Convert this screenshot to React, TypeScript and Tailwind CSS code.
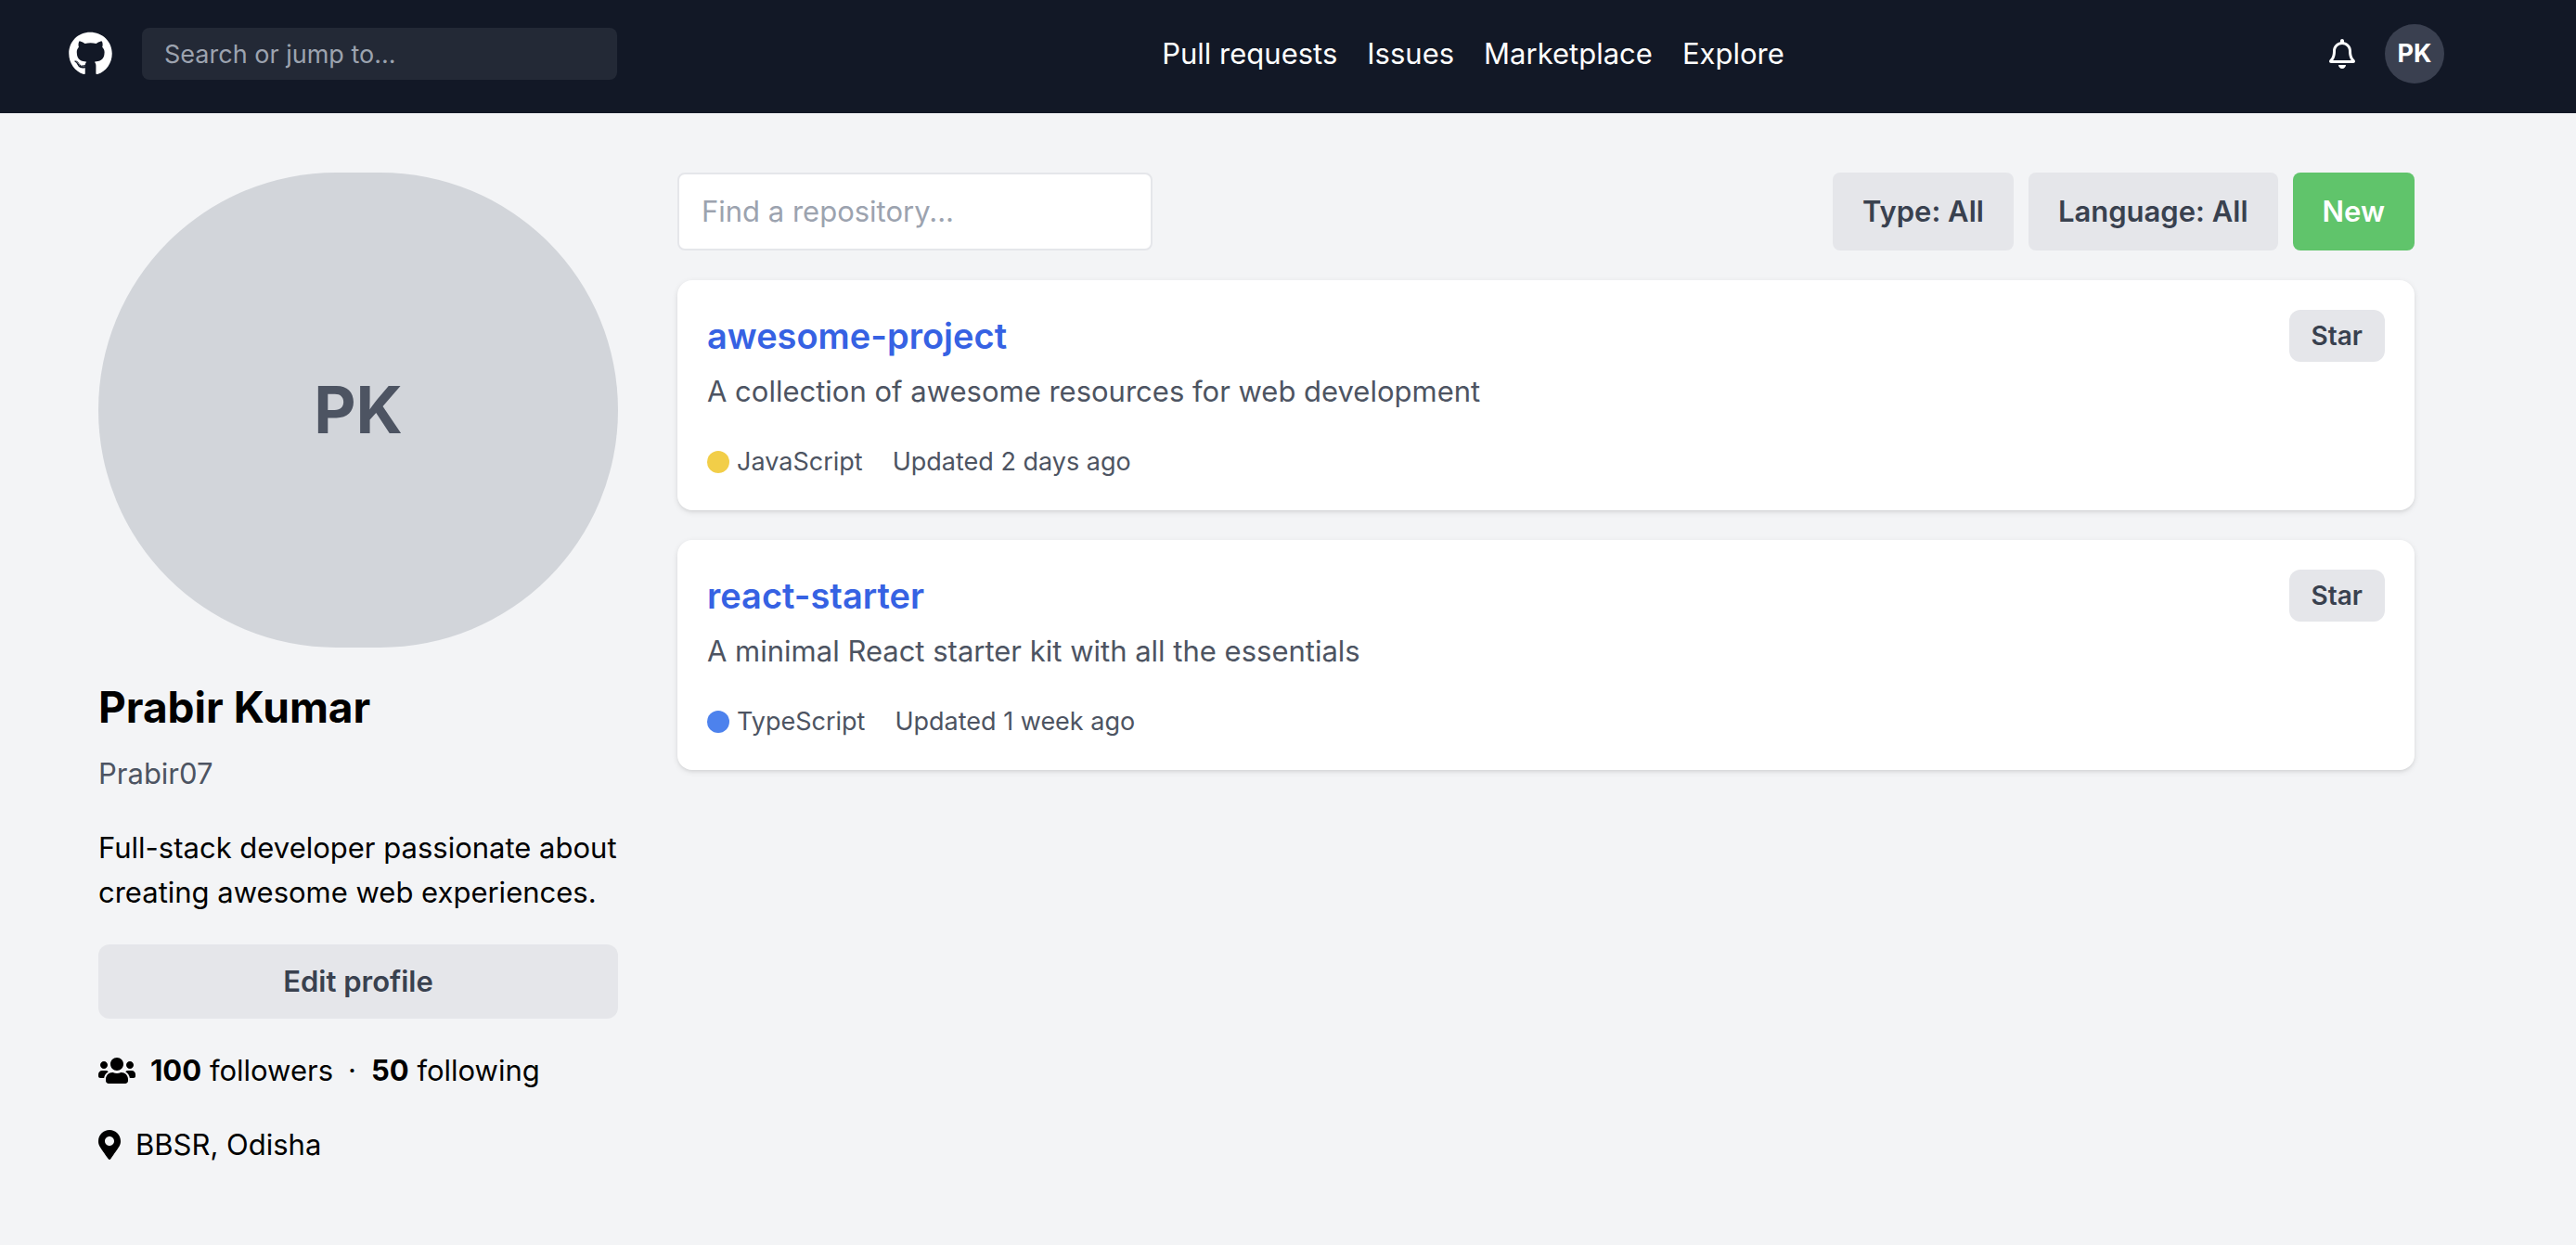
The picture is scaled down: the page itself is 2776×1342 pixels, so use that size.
import React from "react";
import { FaGithub, FaMapMarkerAlt, FaRegBell, FaUsers } from "react-icons/fa";

type Repo = {
  name: string;
  description: string;
  language: string;
  dot: string;
  updated: string;
};

const navLinks = ["Pull requests", "Issues", "Marketplace", "Explore"];

const repos: Repo[] = [
  {
    name: "awesome-project",
    description: "A collection of awesome resources for web development",
    language: "JavaScript",
    dot: "bg-[#f2ce48]",
    updated: "Updated 2 days ago",
  },
  {
    name: "react-starter",
    description: "A minimal React starter kit with all the essentials",
    language: "TypeScript",
    dot: "bg-[#4d82ed]",
    updated: "Updated 1 week ago",
  },
];

function Header() {
  return (
    <header className="bg-[#121826] pt-[26px] pr-[68px] pb-8 text-white">
      <div className="mx-auto flex max-w-[2560px] items-center justify-between">
        <div className="flex items-center gap-8">
          <a href="#home" aria-label="Homepage">
            <FaGithub className="h-12 w-[47px]" />
          </a>
          <input
            type="search"
            aria-label="Search or jump to"
            placeholder="Search or jump to..."
            className="h-14 w-[512px] rounded-lg bg-[#232936] px-6 text-[27px] leading-10 placeholder:text-[#9ca3af]"
          />
        </div>
        <nav className="flex gap-8">
          {navLinks.map((label) => (
            <a key={label} href="#nav">
              {label}
            </a>
          ))}
        </nav>
        <div className="flex items-center gap-8">
          <button type="button" aria-label="Notifications">
            <FaRegBell className="h-8 w-7" />
          </button>
          <button
            type="button"
            className="flex size-16 items-center justify-center rounded-full bg-[#3a4050] text-[27px] leading-10 font-bold"
          >
            PK
          </button>
        </div>
      </div>
    </header>
  );
}

function Profile() {
  return (
    <aside className="w-1/4 pr-16">
      <div className="flex h-[512px] items-center justify-center rounded-full bg-[#d2d5da] text-[70px] font-bold text-[#4d5462]">
        PK
      </div>
      <h1 className="mt-8 text-[46px] leading-16 font-bold">Prabir Kumar</h1>
      <p className="mt-4 text-[#4d5462]">Prabir07</p>
      <p className="mt-8 -mr-4">
        Full-stack developer passionate about creating awesome web experiences.
      </p>
      <button
        type="button"
        className="mt-8 w-full rounded-xl bg-[#e5e6ea] py-4 font-semibold text-[#39414f]"
      >
        Edit profile
      </button>
      <p className="mt-8 flex items-center gap-4">
        <FaUsers className="h-8 w-10" />
        <span>
          <strong>100</strong> followers
        </span>
        <span>·</span>
        <span>
          <strong>50</strong> following
        </span>
      </p>
      <p className="mt-8 flex items-center gap-4">
        <FaMapMarkerAlt className="h-8 w-6" />
        <span>BBSR, Odisha</span>
      </p>
    </aside>
  );
}

function RepoCard({ repo }: { repo: Repo }) {
  return (
    <article className="flex items-start justify-between rounded-2xl bg-white p-8 shadow-[0_2px_6px_0_rgb(0_0_0/0.1),0_2px_4px_-2px_rgb(0_0_0/0.1)]">
      <div>
        <h2 className="text-[38px] leading-14 font-semibold text-[#3662e3]">
          <a href="#repo">{repo.name}</a>
        </h2>
        <p className="mt-2 text-[#4d5462]">{repo.description}</p>
        <div className="mt-8 flex items-center gap-8 text-[27px] leading-10 text-[#4d5462]">
          <span className="flex items-center gap-2">
            <span className={`size-6 rounded-full ${repo.dot}`} />
            {repo.language}
          </span>
          <span>{repo.updated}</span>
        </div>
      </div>
      <button
        type="button"
        className="rounded-xl bg-[#e5e6ea] px-6 py-2 text-[28px] leading-10 font-semibold text-[#39414f]"
      >
        Star
      </button>
    </article>
  );
}

export default function App() {
  return (
    <div className="min-h-screen bg-[#f3f4f6] font-['Inter',sans-serif] text-[31px] leading-12 text-black">
      <Header />
      <div className="pr-[68px]">
        <div className="mx-auto flex max-w-[2560px] px-8 py-16">
          <Profile />
          <main className="flex w-3/4 flex-col gap-8">
            <div className="flex justify-between">
              <input
                type="text"
                aria-label="Find a repository"
                placeholder="Find a repository..."
                className="w-[512px] rounded-lg border-2 border-[#e5e6ea] bg-white px-6 py-4 placeholder:text-[#9ca3af]"
              />
              <div className="flex gap-4 font-semibold text-[#39414f]">
                <button type="button" className="rounded-lg bg-[#e5e6ea] px-8 py-4">
                  Type: All
                </button>
                <button type="button" className="rounded-lg bg-[#e5e6ea] px-8 py-4">
                  Language: All
                </button>
                <button type="button" className="rounded-lg bg-[#60c46b] px-8 py-4 text-white">
                  New
                </button>
              </div>
            </div>
            {repos.map((repo) => (
              <RepoCard key={repo.name} repo={repo} />
            ))}
          </main>
        </div>
      </div>
    </div>
  );
}
